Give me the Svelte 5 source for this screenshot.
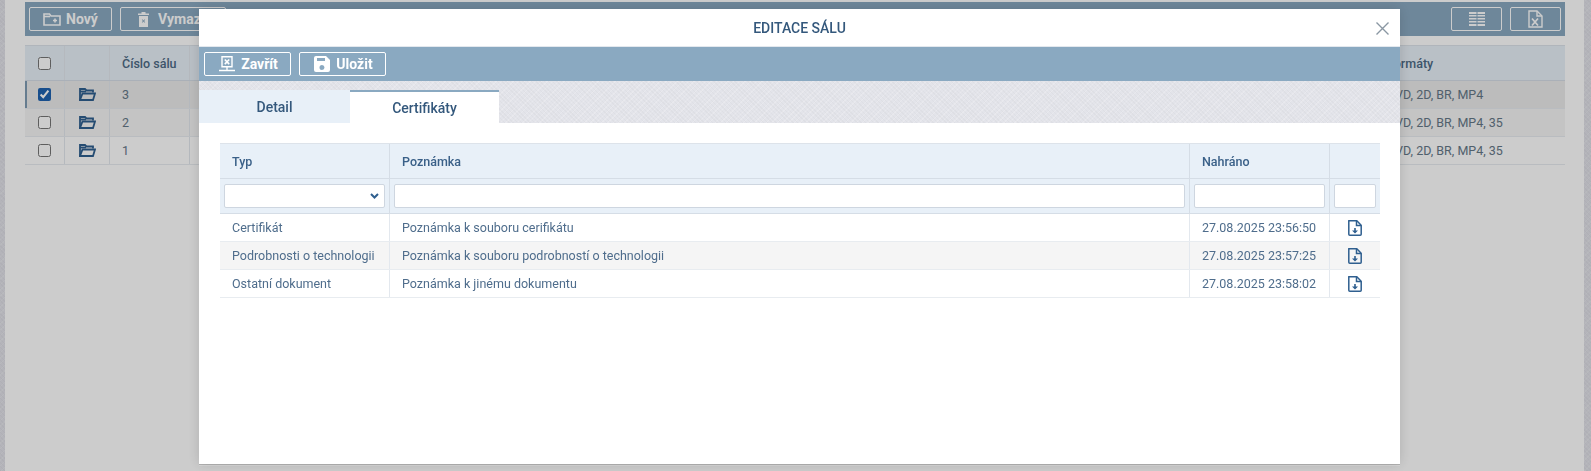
<script lang="ts">
    const halls = [
        { number: '3', formats: 'DVD, 2D, BR, MP4', selected: true },
        { number: '2', formats: 'DVD, 2D, BR, MP4, 35', selected: false },
        { number: '1', formats: 'DVD, 2D, BR, MP4, 35', selected: false }
    ];

    const files = [
        { type: 'Certifikát', note: 'Poznámka k souboru cerifikátu', uploaded: '27.08.2025 23:56:50' },
        { type: 'Podrobnosti o technologii', note: 'Poznámka k souboru podrobností o technologii', uploaded: '27.08.2025 23:57:25' },
        { type: 'Ostatní dokument', note: 'Poznámka k jinému dokumentu', uploaded: '27.08.2025 23:58:02' }
    ];
</script>

<div class="page">
    <main class="panel">
        <div class="toolbar">
            <button class="btn new">
                <svg width="18" height="13" viewBox="0 0 18 13" fill="none" stroke="currentColor" stroke-width="1.600"><path d="M1 12V1h5.500l1.500 2h9v9z" /><path d="M1 3.500h6" /><path d="M12 5.500v4M10 7.500h4" /></svg>
                Nový
            </button>
            <button class="btn delete">
                <svg width="11" height="15" viewBox="0 0 11 15" fill="currentColor"><path fill-rule="evenodd" d="M0 1.500h3.500V0h4v1.500H11V3H0zM1 4h9v11H1zM3.800 7.500l1 1.500-1 1.500h1l.7-1 .7 1h1l-1-1.500 1-1.500h-1l-.7 1-.7-1z" /></svg>
                Vymazat
            </button>
            <span class="spacer"></span>
            <button class="btn square">
                <svg width="16" height="14" viewBox="0 0 16 14" fill="currentColor"><path d="M0 0h7.500v2H0zM8.500 0H16v2H8.500zM0 3h7.500v1.500H0zM8.500 3H16v1.500H8.500zM0 6h7.500v1.500H0zM8.500 6H16v1.500H8.500zM0 9h7.500v1.500H0zM8.500 9H16v1.500H8.500zM0 12h7.500v2H0zM8.500 12H16v2H8.500z" /></svg>
            </button>
            <button class="btn square">
                <svg width="15" height="18" viewBox="0 0 15 18" fill="none" stroke="currentColor" stroke-width="1.400"><path d="M1 1h8l5 5v11H1z" /><path d="M9 1v5h5" /><path stroke-width="1.700" d="M4 8.500l6 7M10 8.500l-6 7" /></svg>
            </button>
        </div>

        <div class="halls">
            <div class="hall-row head">
                <div class="cell center"><input type="checkbox" /></div>
                <div class="cell"></div>
                <div class="cell">Číslo sálu</div>
                <div class="cell"></div>
                <div class="cell">Formáty</div>
            </div>
            {#each halls as hall}
                <div class="hall-row" class:selected={hall.selected}>
                    <div class="cell center"><input type="checkbox" checked={hall.selected} /></div>
                    <div class="cell center">
                        <svg width="17" height="13" viewBox="0 0 17 13" fill="none" stroke="#2f5f8f" stroke-width="1.800"><path d="M1 12V1h5l1.500 1.500H14v2" /><path d="M1 3.500h6" /><path d="M1 12l2.500-6.500H16L14 12z" /></svg>
                    </div>
                    <div class="cell">{hall.number}</div>
                    <div class="cell"></div>
                    <div class="cell">{hall.formats}</div>
                </div>
            {/each}
        </div>
    </main>

    <div class="backdrop"></div>

    <div class="modal" role="dialog" aria-modal="true">
        <header class="modal-header">
            <h2>EDITACE SÁLU</h2>
            <button class="close" aria-label="Zavřít">
                <svg width="13" height="13" viewBox="0 0 13 13" stroke="#8a97a3" stroke-width="1.400"><path d="M.5.500l12 12M12.500.500l-12 12" /></svg>
            </button>
        </header>

        <div class="modal-toolbar">
            <button class="btn">
                <svg width="16" height="16" viewBox="0 0 16 16" fill="none" stroke="currentColor" stroke-width="1.400"><path d="M3 .8h10v10H3z" /><path stroke-width="1.600" d="M5.800 3.500l4.400 4.600M10.200 3.500L5.800 8.100" /><path d="M8 11v3M0 14.500h16" /></svg>
                Zavřít
            </button>
            <button class="btn">
                <svg width="16" height="16" viewBox="0 0 16 16" fill="currentColor"><path fill-rule="evenodd" d="M2 0h10l4 4v10a2 2 0 0 1-2 2H2a2 2 0 0 1-2-2V2a2 2 0 0 1 2-2zM3 2v3h8V2zM8 9a2.500 2.500 0 1 0 0 5 2.500 2.500 0 0 0 0-5z" /></svg>
                Uložit
            </button>
        </div>

        <div class="tabs">
            <div class="tab">Detail</div>
            <div class="tab active">Certifikáty</div>
        </div>

        <div class="modal-body">
            <div class="file-row head">
                <div class="cell">Typ</div>
                <div class="cell">Poznámka</div>
                <div class="cell">Nahráno</div>
                <div class="cell"></div>
            </div>
            <div class="file-row filter">
                <div class="cell">
                    <div class="select">
                        <svg width="9" height="6" viewBox="0 0 9 6" fill="none" stroke="#2f5f8f" stroke-width="2"><path d="M1 1l3.500 3.500L8 1" /></svg>
                    </div>
                </div>
                <div class="cell"><input type="text" /></div>
                <div class="cell"><input type="text" /></div>
                <div class="cell"><input type="text" /></div>
            </div>
            {#each files as file}
                <div class="file-row">
                    <div class="cell">{file.type}</div>
                    <div class="cell">{file.note}</div>
                    <div class="cell">{file.uploaded}</div>
                    <div class="cell center">
                        <svg width="14" height="16" viewBox="0 0 14 16" fill="none" stroke="#2f5f8f" stroke-width="1.500"><path d="M1.800.8h7l4.400 4.400v9a1 1 0 0 1-1 1H1.800a1 1 0 0 1-1-1v-13.400a1 1 0 0 1 1-1z" /><path d="M8.500 1v4.500H13" /><path fill="#2f5f8f" stroke="none" d="M6.200 8h1.600v2.500H10L7 13.500 4 10.500h2.200z" /></svg>
                    </div>
                </div>
            {/each}
        </div>
    </div>
</div>

<style>
    :global(body) {
        margin: 0;
        overflow: hidden;
        font-family: Roboto, "Liberation Sans", sans-serif;
    }

    .page {
        height: 471px;
        padding: 0 7px 0 5px;
        box-sizing: border-box;
        background:
            repeating-linear-gradient(45deg, rgba(0, 0, 0, 0.025) 0 1px, transparent 1px 3px),
            repeating-linear-gradient(-45deg, rgba(255, 255, 255, 0.2) 0 1px, transparent 1px 4px),
            #e1e2e9;
    }

    .panel {
        height: 100%;
        padding: 2px 19px 0 20px;
        box-sizing: border-box;
        background: #fff;
    }

    .backdrop {
        position: fixed;
        inset: 0;
        background: rgba(0, 0, 0, 0.2);
    }

    button {
        font-family: inherit;
    }

    .toolbar,
    .modal-toolbar {
        display: flex;
        align-items: center;
        background: #8aa9c1;
    }

    .toolbar {
        height: 34px;
        padding: 0 4px;
        gap: 8px;
        margin-bottom: 9px;
    }

    .spacer {
        flex: 1;
    }

    .btn {
        display: flex;
        align-items: center;
        justify-content: center;
        gap: 6px;
        height: 24px;
        padding: 0 14px;
        border: 1px solid #fff;
        border-radius: 2px;
        background: transparent;
        color: #fff;
        font-size: 14px;
        font-weight: 700;
    }

    .btn.new {
        width: 83px;
        padding: 0;
        gap: 5px;
    }

    .btn.delete {
        width: 106px;
        padding: 0 0 0 17px;
        gap: 9px;
        justify-content: flex-start;
    }

    .btn.square {
        width: 51px;
        padding: 0;
    }

    .cell {
        display: flex;
        align-items: center;
        min-width: 0;
        padding: 0 12px;
        box-sizing: border-box;
        border-right: 1px solid #e3e8ee;
        white-space: nowrap;
    }

    .cell.center {
        justify-content: center;
        padding: 0;
    }

    .cell:last-child {
        border-right: 0;
    }

    .hall-row {
        display: grid;
        grid-template-columns: 40px 45px 80px 1fr 190px;
        height: 28px;
        border-bottom: 1px solid #e8ecf0;
        box-sizing: border-box;
        color: #657888;
        font-size: 12.500px;
    }

    .hall-row:nth-child(odd) {
        background: #f5f5f5;
    }

    .hall-row.head {
        height: 36px;
        background: #e8f0f8;
        border-top: 1px solid #dde3ea;
        border-bottom: 1px solid #d5dde6;
        color: #4d6a85;
        font-weight: 500;
    }

    .hall-row.selected {
        background: #ebebeb;
        box-shadow: inset 2px 0 0 #7f9bb3;
    }

    input[type="checkbox"] {
        width: 13px;
        height: 13px;
        margin: 0;
        accent-color: #1f62b0;
    }

    .modal {
        position: fixed;
        top: 9px;
        left: 199px;
        width: 1201px;
        height: 455px;
        display: flex;
        flex-direction: column;
        background: #fff;
        box-shadow: 0 0 12px rgba(0, 0, 0, 0.15), 0 1px 0 #b4b4b4, 0 2px 0 #d8d8d8;
    }

    .modal-header {
        position: relative;
        flex: none;
        height: 38px;
        display: flex;
        align-items: center;
        justify-content: center;
        border-bottom: 1px solid #e3e8ee;
        box-sizing: border-box;
    }

    .modal-header h2 {
        margin: 0;
        font-size: 14px;
        font-weight: 500;
        color: #34587c;
    }

    .close {
        position: absolute;
        top: 13px;
        right: 11px;
        padding: 0;
        border: 0;
        background: none;
        line-height: 0;
    }

    .modal-toolbar {
        flex: none;
        height: 34px;
        padding: 0 5px;
        gap: 8px;
    }

    .modal-toolbar .btn {
        padding: 0 0 0 2px;
        width: 87px;
    }

    .tabs {
        flex: none;
        display: flex;
        height: 42px;
        padding-top: 9px;
        box-sizing: border-box;
        background:
            repeating-linear-gradient(45deg, rgba(0, 0, 0, 0.025) 0 1px, transparent 1px 3px),
            repeating-linear-gradient(-45deg, rgba(255, 255, 255, 0.2) 0 1px, transparent 1px 4px),
            #e3e4ea;
    }

    .tab {
        display: flex;
        align-items: center;
        justify-content: center;
        width: 151px;
        background: #e8f0f8;
        color: #34587c;
        font-size: 14px;
        font-weight: 500;
    }

    .tab.active {
        width: 149px;
        border-top: 2px solid #8aa9c1;
        background: #fff;
    }

    .modal-body {
        flex: 1;
        padding: 20px 20px 0 21px;
    }

    .file-row {
        display: grid;
        grid-template-columns: 170px 800px 140px 50px;
        height: 28px;
        border-bottom: 1px solid #e8ecf0;
        box-sizing: border-box;
        color: #4f6d8c;
        font-size: 12.500px;
    }

    .file-row:nth-child(even) {
        background: #f5f5f5;
    }

    .file-row.head {
        height: 36px;
        background: #e8f0f8;
        border-top: 1px solid #dde3ea;
        border-bottom: 1px solid #d5dde6;
        color: #3a6088;
        font-weight: 500;
    }

    .file-row.filter {
        height: 35px;
        background: #e8f0f8;
        border-bottom: 1px solid #d5dde6;
    }

    .file-row.head .cell,
    .file-row.filter .cell {
        border-right-color: #d5dde6;
    }

    .file-row.filter .cell {
        padding: 0 4px;
    }

    .file-row.filter input,
    .select {
        display: flex;
        align-items: center;
        justify-content: flex-end;
        width: 100%;
        height: 24px;
        padding: 0 5px;
        border: 1px solid #ced6e0;
        border-radius: 2px;
        background: #fff;
        box-sizing: border-box;
    }
</style>
